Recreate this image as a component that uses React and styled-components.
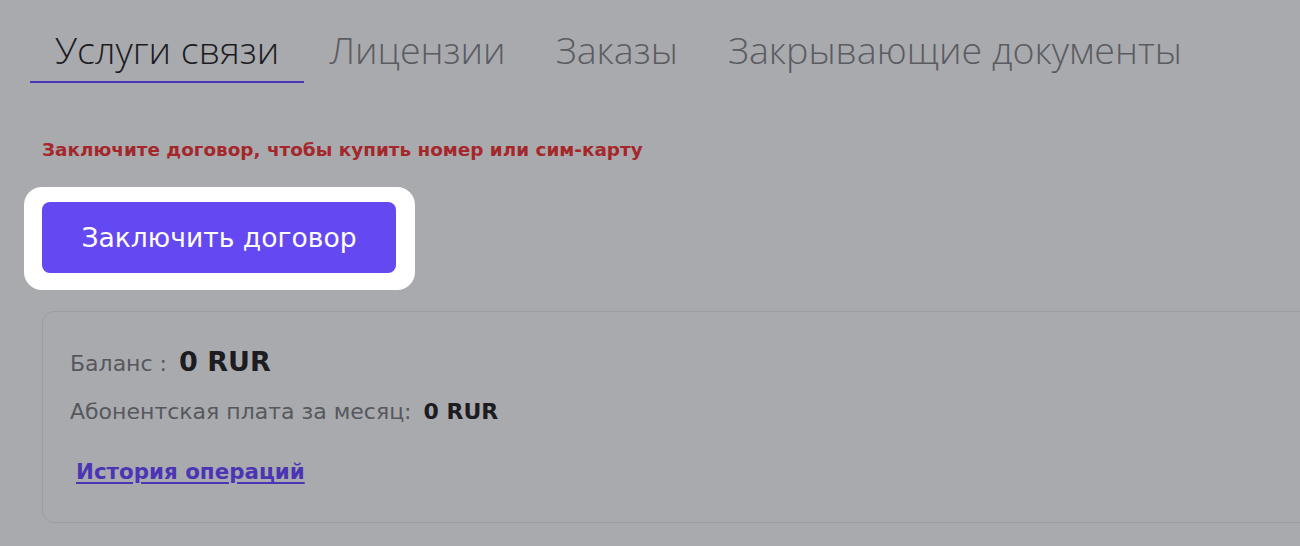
import React from "react";
import styled, { createGlobalStyle, css } from "styled-components";

// Базові стилі сторінки: затемнений фон підказки
const GlobalStyle = createGlobalStyle`
  html, body {
    margin: 0;
    padding: 0;
    background: #a9aaae;
    overflow: hidden;
  }
  body {
    font-family: "DejaVu Sans", "Open Sans", sans-serif;
  }
`;

const tabs = [
  "Услуги связи",
  "Лицензии",
  "Заказы",
  "Закрывающие документы",
];

export default function App() {
  return (
    <>
      <GlobalStyle />
      <Page>
        <Tabs>
          {tabs.map((title, i) => (
            <Tab key={title} active={i === 0}>
              {title}
            </Tab>
          ))}
        </Tabs>
        <Content>
          <Notice>Заключите договор, чтобы купить номер или сим-карту</Notice>
          <Spotlight>
            <Button>Заключить договор</Button>
          </Spotlight>
          <Card>
            <Row>
              <Label>Баланс :</Label>
              <Value big>0 RUR</Value>
            </Row>
            <Row>
              <Label>Абонентская плата за месяц:</Label>
              <Value>0 RUR</Value>
            </Row>
            <HistoryLink href="#">История операций</HistoryLink>
          </Card>
        </Content>
      </Page>
    </>
  );
}

// Сторінка
const Page = styled.div`
  width: 1300px;
  height: 546px;
  padding: 24px 0 0 30px;
  box-sizing: border-box;
`;

// Рядок вкладок
const Tabs = styled.div`
  display: flex;
`;

// Одна вкладка
const Tab = styled.div`
  font-family: "Open Sans", sans-serif;
  font-size: 37.6px;
  font-weight: 300;
  line-height: 47px;
  padding: 2px 25px 8px;
  color: #5b5c61;
  border-bottom: 2px solid transparent;

  ${({ active }) =>
    active &&
    css`
      color: #1c1c21;
      border-bottom-color: #4a35b6;
    `}
`;

// Основна частина під вкладками
const Content = styled.div`
  padding-left: 12px;
  display: flex;
  flex-direction: column;
  align-items: flex-start;
`;

// Червоне попередження
const Notice = styled.div`
  margin-top: 55px;
  font-size: 18.4px;
  font-weight: 700;
  line-height: 24px;
  color: #a4282b;
`;

// Біла підсвітка навколо кнопки
const Spotlight = styled.div`
  margin: 25px 0 0 -18px;
  padding: 15px 19px 17px 18px;
  background: #ffffff;
  border-radius: 18px;
`;

// Кнопка "Заключить договор"
const Button = styled.button`
  width: 354px;
  height: 71px;
  border: none;
  border-radius: 8px;
  background: #6449f3;
  color: #ffffff;
  font-family: "DejaVu Sans", sans-serif;
  font-size: 26.6px;
  font-weight: 400;
  cursor: pointer;
`;

// Картка з балансом
const Card = styled.div`
  margin-top: 21px;
  width: 1300px;
  height: 212px;
  box-sizing: border-box;
  border: 1px solid #9c9da1;
  border-radius: 12px;
  padding: 33px 27px 0;
  display: flex;
  flex-direction: column;
  align-items: flex-start;
  gap: 10px;
`;

const Row = styled.div`
  display: flex;
  align-items: baseline;
  gap: 12px;
`;

const Label = styled.span`
  font-size: 22px;
  line-height: 38px;
  color: #57585d;
`;

const Value = styled.span`
  font-size: ${({ big }) => (big ? "27px" : "22px")};
  font-weight: 700;
  color: #1c1c21;
`;

// Посилання "История операций"
const HistoryLink = styled.a`
  margin: 18px 0 0 6px;
  font-size: 21.4px;
  font-weight: 700;
  color: #4b35b5;
  text-decoration: underline;
  text-underline-offset: 3px;
`;
